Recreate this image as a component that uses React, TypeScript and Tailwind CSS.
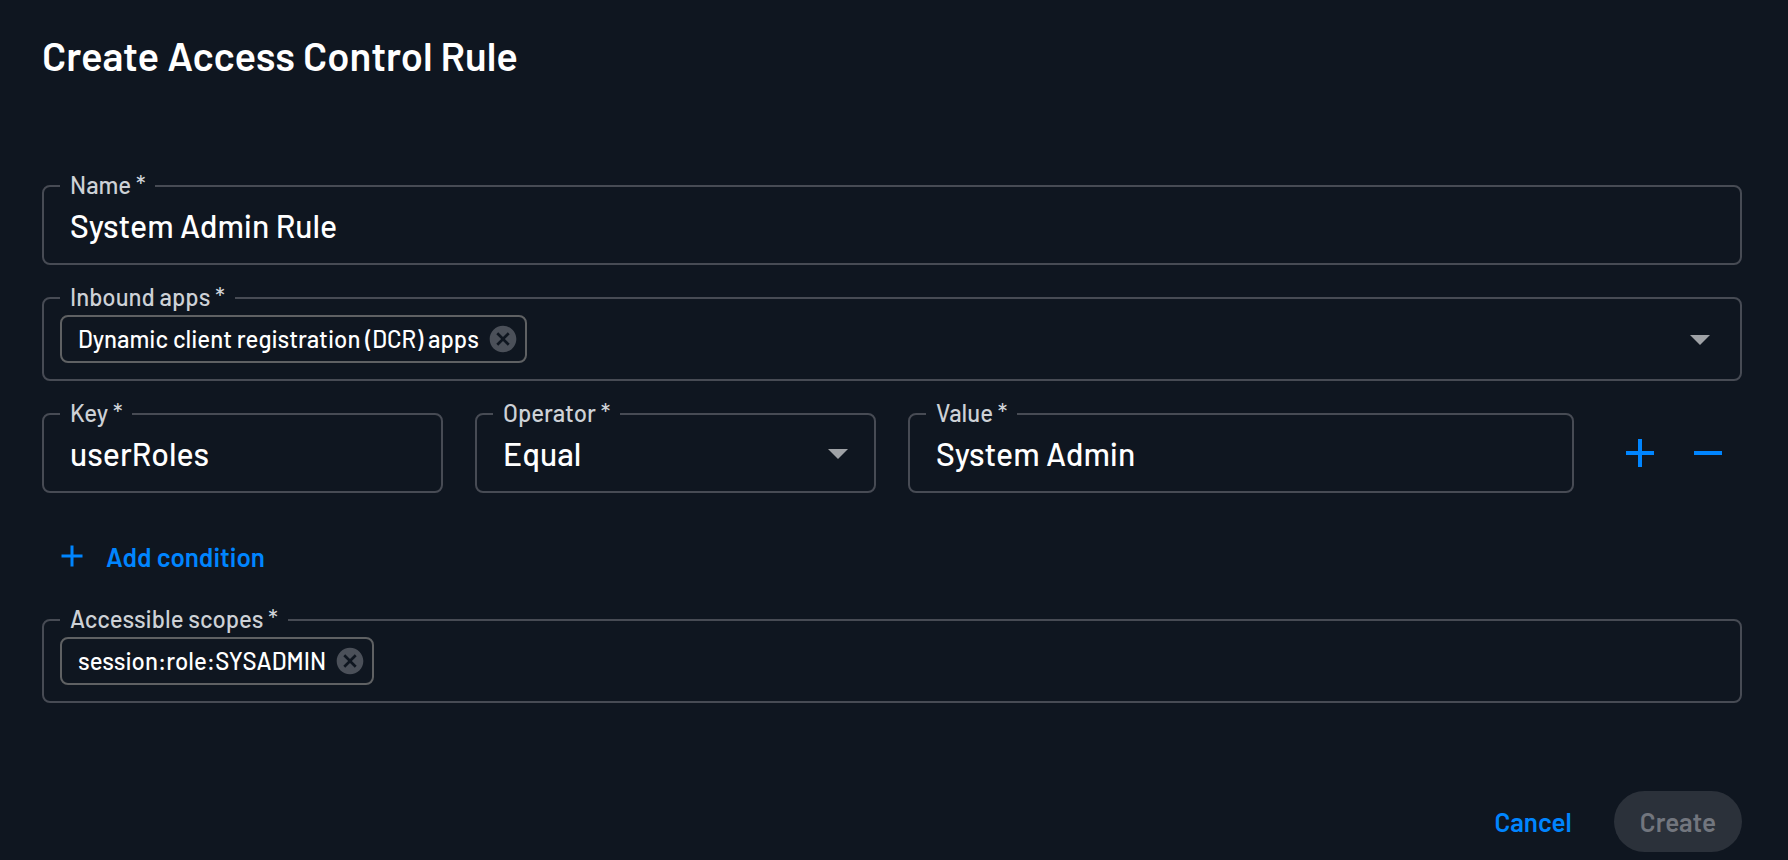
import { useState, type ReactNode } from 'react'

type FieldProps = {
  id: string
  label: string
  className?: string
  children: ReactNode
}

// Outlined field, the legend cuts the notch in the top border
function Field({ id, label, className = '', children }: FieldProps) {
  return (
    <fieldset className={`min-w-0 rounded-lg border-2 border-[#474b54] ${className}`}>
      <legend className="ml-4 px-[10px] pb-[2px] text-2xl leading-[0] whitespace-nowrap text-[#cdd1d6]">
        <label htmlFor={id}>{label} *</label>
      </legend>
      {children}
    </fieldset>
  )
}

function TextField({ id, label, value, className }: Omit<FieldProps, 'children'> & { value: string }) {
  const [text, setText] = useState(value)

  return (
    <Field id={id} label={label} className={className}>
      <input
        id={id}
        type="text"
        value={text}
        onChange={(e) => setText(e.target.value)}
        className="block h-19 w-full bg-transparent px-[26px] text-[32px] text-white outline-none"
      />
    </Field>
  )
}

function Chip({ children }: { children: ReactNode }) {
  return (
    <span className="flex h-12 shrink-0 items-center gap-2 rounded-lg border-2 border-[#5f6163] pr-1.5 pl-4 text-2xl text-white">
      <span>{children}</span>
      <button type="button" aria-label="Remove" className="text-[#4b5059]">
        <svg viewBox="0 0 24 24" className="size-8" fill="currentColor">
          <path d="M12 2C6.47 2 2 6.47 2 12s4.47 10 10 10 10-4.47 10-10S17.53 2 12 2zm5 13.59L15.59 17 12 13.41 8.41 17 7 15.59 10.59 12 7 8.41 8.41 7 12 10.59 15.59 7 17 8.41 13.41 12 17 15.59z" />
        </svg>
      </button>
    </span>
  )
}

function PlusIcon({ className }: { className: string }) {
  return (
    <svg viewBox="0 0 24 24" className={className} fill="currentColor">
      <path d="M19 13h-6v6h-2v-6H5v-2h6V5h2v6h6v2z" />
    </svg>
  )
}

function ArrowDown({ className = '' }: { className?: string }) {
  return (
    <svg viewBox="0 0 24 24" className={`size-12 text-[#9fa2a6] ${className}`} fill="currentColor">
      <path d="M7 10l5 5 5-5z" />
    </svg>
  )
}

export default function App() {
  return (
    <main className="min-h-screen bg-[#0f1620] pt-[31px] pr-[46px] pb-1 pl-[42px] font-['Barlow','Roboto',sans-serif] font-medium">
      <h1 className="text-[40px] leading-12 font-semibold text-white">Create Access Control Rule</h1>

      <form className="mt-[106px]" onSubmit={(e) => e.preventDefault()}>
        <div className="flex flex-col gap-8">
          <TextField id="name" label="Name" value="System Admin Rule" />

          <Field id="apps" label="Inbound apps">
            <div className="flex items-center gap-4 p-4">
              <Chip>Dynamic client registration (DCR) apps</Chip>
              <input id="apps" type="text" className="h-12 min-w-0 flex-1 bg-transparent text-[32px] text-white outline-none" />
              <button type="button" aria-label="Open">
                <ArrowDown />
              </button>
            </div>
          </Field>

          <div className="flex items-center">
            <div className="grid flex-1 grid-cols-[401fr_401fr_666fr] gap-8">
              <TextField id="key" label="Key" value="userRoles" />
              <Field id="operator" label="Operator">
                <div className="relative">
                  <select
                    id="operator"
                    defaultValue="Equal"
                    className="block h-19 w-full appearance-none bg-transparent px-[26px] text-[32px] text-white outline-none"
                  >
                    <option>Equal</option>
                  </select>
                  <ArrowDown className="pointer-events-none absolute inset-y-0 right-3 my-auto" />
                </div>
              </Field>
              <TextField id="value" label="Value" value="System Admin" />
            </div>
            <div className="ml-[42px] flex gap-5 pr-[10px] text-[#0085ff]">
              <button type="button" aria-label="Add">
                <PlusIcon className="size-12" />
              </button>
              <button type="button" aria-label="Remove">
                <svg viewBox="0 0 24 24" className="size-12" fill="currentColor">
                  <path d="M19 13H5v-2h14v2z" />
                </svg>
              </button>
            </div>
          </div>
        </div>

        <button type="button" className="my-[39px] ml-3 flex h-12 items-center gap-4 text-[26px] font-semibold text-[#0085ff]">
          <PlusIcon className="size-9" />
          Add condition
        </button>

        <Field id="scopes" label="Accessible scopes">
          <div className="flex items-center gap-4 p-4">
            <Chip>session:role:SYSADMIN</Chip>
            <input id="scopes" type="text" className="h-12 min-w-0 flex-1 bg-transparent text-[32px] text-white outline-none" />
          </div>
        </Field>

        <div className="mt-22 flex justify-end gap-4 text-[26px] font-semibold">
          <button type="button" className="h-[61px] px-[26px] text-[#0085ff]">
            Cancel
          </button>
          <button type="submit" disabled className="h-[61px] rounded-full bg-[#2b313a] px-[26px] text-[#72767e]">
            Create
          </button>
        </div>
      </form>
    </main>
  )
}
